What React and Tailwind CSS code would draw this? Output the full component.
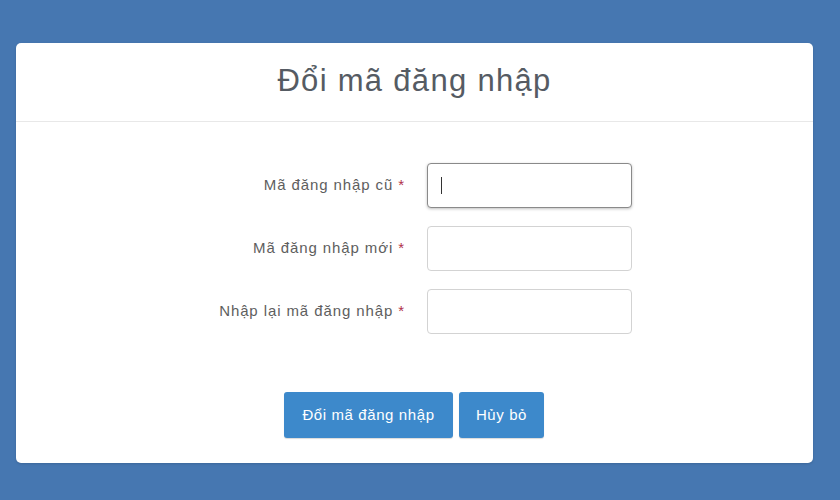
export default function App() {
  const rows = ["Mã đăng nhập cũ", "Mã đăng nhập mới", "Nhập lại mã đăng nhập"];

  return (
    <div className="h-[500px] w-[840px] overflow-hidden bg-[#4677b1] pt-[43px] pl-[16px] pr-[27px] font-['Liberation_Sans',Arial,sans-serif]">
      <div className="h-[420px] rounded-[5px] bg-white shadow-sm">
        <div className="flex h-[79px] items-center justify-center border-b border-[#e8e8e8]">
          <h1 className="pb-[2px] text-[31px] tracking-[1.3px] text-[#555b63]">Đổi mã đăng nhập</h1>
        </div>

        <div className="flex flex-col gap-[18px] pt-[41px]">
          {rows.map((label, i) => (
            <div key={label} className="flex items-center">
              <label className="w-[389px] text-right text-[15px] tracking-[0.9px] text-[#5e5e5e]">
                {label} <span className="text-[#b0304a]">*</span>
              </label>
              <div
                className={
                  i === 0
                    ? "ml-[22px] flex h-[45px] w-[205px] items-center rounded-[4px] border border-[#8a8a8a] bg-white pl-[13px] shadow-[0_1px_3px_rgba(0,0,0,0.25)]"
                    : "ml-[22px] h-[45px] w-[205px] rounded-[4px] border border-[#d3d3d3] bg-white"
                }
              >
                {i === 0 && <span className="h-[17px] w-[1px] bg-[#333]" />}
              </div>
            </div>
          ))}
        </div>

        <div className="mt-[58px] flex justify-center gap-[6px] pr-[1px]">
          <button className="h-[46px] w-[169px] rounded-[3px] bg-[#3d89cb] text-[15px] tracking-[0.6px] text-white shadow-[0_1px_1px_rgba(0,0,0,0.15)]">
            Đổi mã đăng nhập
          </button>
          <button className="h-[46px] w-[85px] rounded-[3px] bg-[#3d89cb] text-[15px] tracking-[0.6px] text-white shadow-[0_1px_1px_rgba(0,0,0,0.15)]">
            Hủy bỏ
          </button>
        </div>
      </div>
    </div>
  );
}
